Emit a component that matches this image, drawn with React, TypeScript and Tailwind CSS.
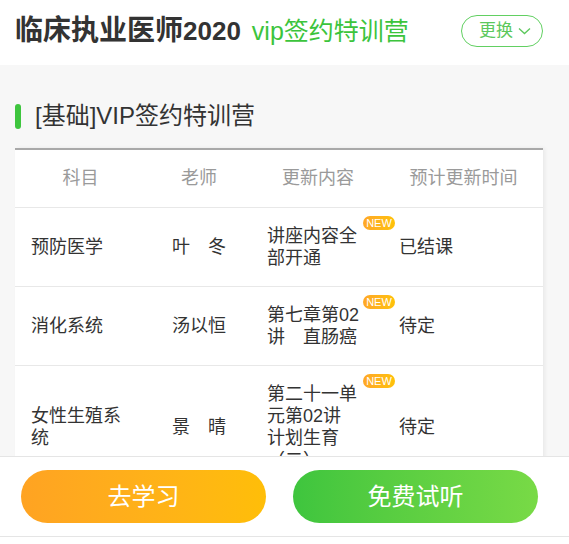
const font = { fontFamily: '"Liberation Sans", "Noto Sans CJK SC", sans-serif' };

type Row = {
  subject: string[];
  teacher: string;
  content: string[];
  time: string;
};

const rows: Row[] = [
  { subject: ['预防医学'], teacher: '叶　冬', content: ['讲座内容全', '部开通'], time: '已结课' },
  { subject: ['消化系统'], teacher: '汤以恒', content: ['第七章第02', '讲　直肠癌'], time: '待定' },
  {
    subject: ['女性生殖系', '统'],
    teacher: '景　晴',
    content: ['第二十一单', '元第02讲', '计划生育', '（二）'],
    time: '待定',
  },
];

function Lines({ lines }: { lines: string[] }) {
  return (
    <>
      {lines.map((l, i) => (
        <span key={i} className="block whitespace-nowrap">
          {l}
        </span>
      ))}
    </>
  );
}

export default function App() {
  return (
    <div className="flex h-[544px] w-full flex-col overflow-hidden bg-white text-[#333]" style={font}>
      {/* top bar */}
      <div className="flex h-[65px] shrink-0 items-center bg-white pb-[3px] pl-[15px] pr-[26px]">
        <h1 className="text-[28px] font-bold leading-none text-[#333]">
          临床执业医师<span className="text-[26px]">2020</span>
        </h1>
        <span className="ml-[11px] text-[25px] leading-none text-[#3cc43c]">vip签约特训营</span>
        <button className="ml-auto flex h-[32px] w-[82px] items-center justify-center gap-[5px] rounded-full border border-[#62d062] pl-[6px] text-[17px] text-[#5cc85c]">
          更换
          <svg width="13" height="8" viewBox="0 0 13 8" fill="none">
            <path d="M1 1.5l5.5 5 5.5-5" stroke="#5cc85c" strokeWidth="1.3" />
          </svg>
        </button>
      </div>

      {/* main */}
      <div className="flex-1 overflow-hidden bg-[#f7f7f7] pl-[15px] pr-[26px] pt-[35px]">
        <div className="mb-[16px] flex h-[32px] items-center">
          <div className="h-[25px] w-[6px] rounded-full bg-[#3ec53e]" />
          <h2 className="ml-[14px] text-[24px] leading-none text-[#333]">[基础]VIP签约特训营</h2>
        </div>

        <div className="border-t-2 border-[#a9a9a9] bg-white shadow-[2px_0_4px_rgba(0,0,0,0.06)]">
          <div className="flex h-[58px] items-center border-b border-[#e8e8e8] text-[18px] text-[#9a9a9a]">
            <div className="w-[131px] text-center">科目</div>
            <div className="w-[106px] text-center">老师</div>
            <div className="w-[132px] text-center">更新内容</div>
            <div className="flex-1 text-center">预计更新时间</div>
          </div>

          {rows.map((r, i) => (
            <div key={i} className="flex items-center border-b border-[#e8e8e8] text-[18px] leading-[22px]">
              <div className="w-[131px] pl-[16px] pr-[16px]">
                <Lines lines={r.subject} />
              </div>
              <div className="w-[106px] text-center">{r.teacher}</div>
              <div className="relative w-[132px] self-stretch py-[17px] pl-[15px]">
                <Lines lines={r.content} />
                <span className="absolute left-[111px] top-[8px] flex h-[14px] w-[32px] items-center justify-center rounded-full bg-gradient-to-r from-[#ffa726] to-[#ffc107] text-[11px] font-medium leading-none text-white">
                  NEW
                </span>
              </div>
              <div className="flex-1 pl-[15px]">{r.time}</div>
            </div>
          ))}
        </div>
      </div>

      {/* bottom actions */}
      <div className="flex shrink-0 gap-[27px] border-y border-[#e5e5e5] bg-white py-[13px] pl-[21px] pr-[31px]">
        <button className="h-[53px] flex-1 rounded-full bg-gradient-to-r from-[#ffa322] to-[#ffbe08] text-[24px] text-white">
          去学习
        </button>
        <button className="h-[53px] flex-1 rounded-full bg-gradient-to-r from-[#3ec53e] to-[#78da46] text-[24px] text-white">
          免费试听
        </button>
      </div>
      <div className="h-[7px] shrink-0 bg-white" />
    </div>
  );
}
